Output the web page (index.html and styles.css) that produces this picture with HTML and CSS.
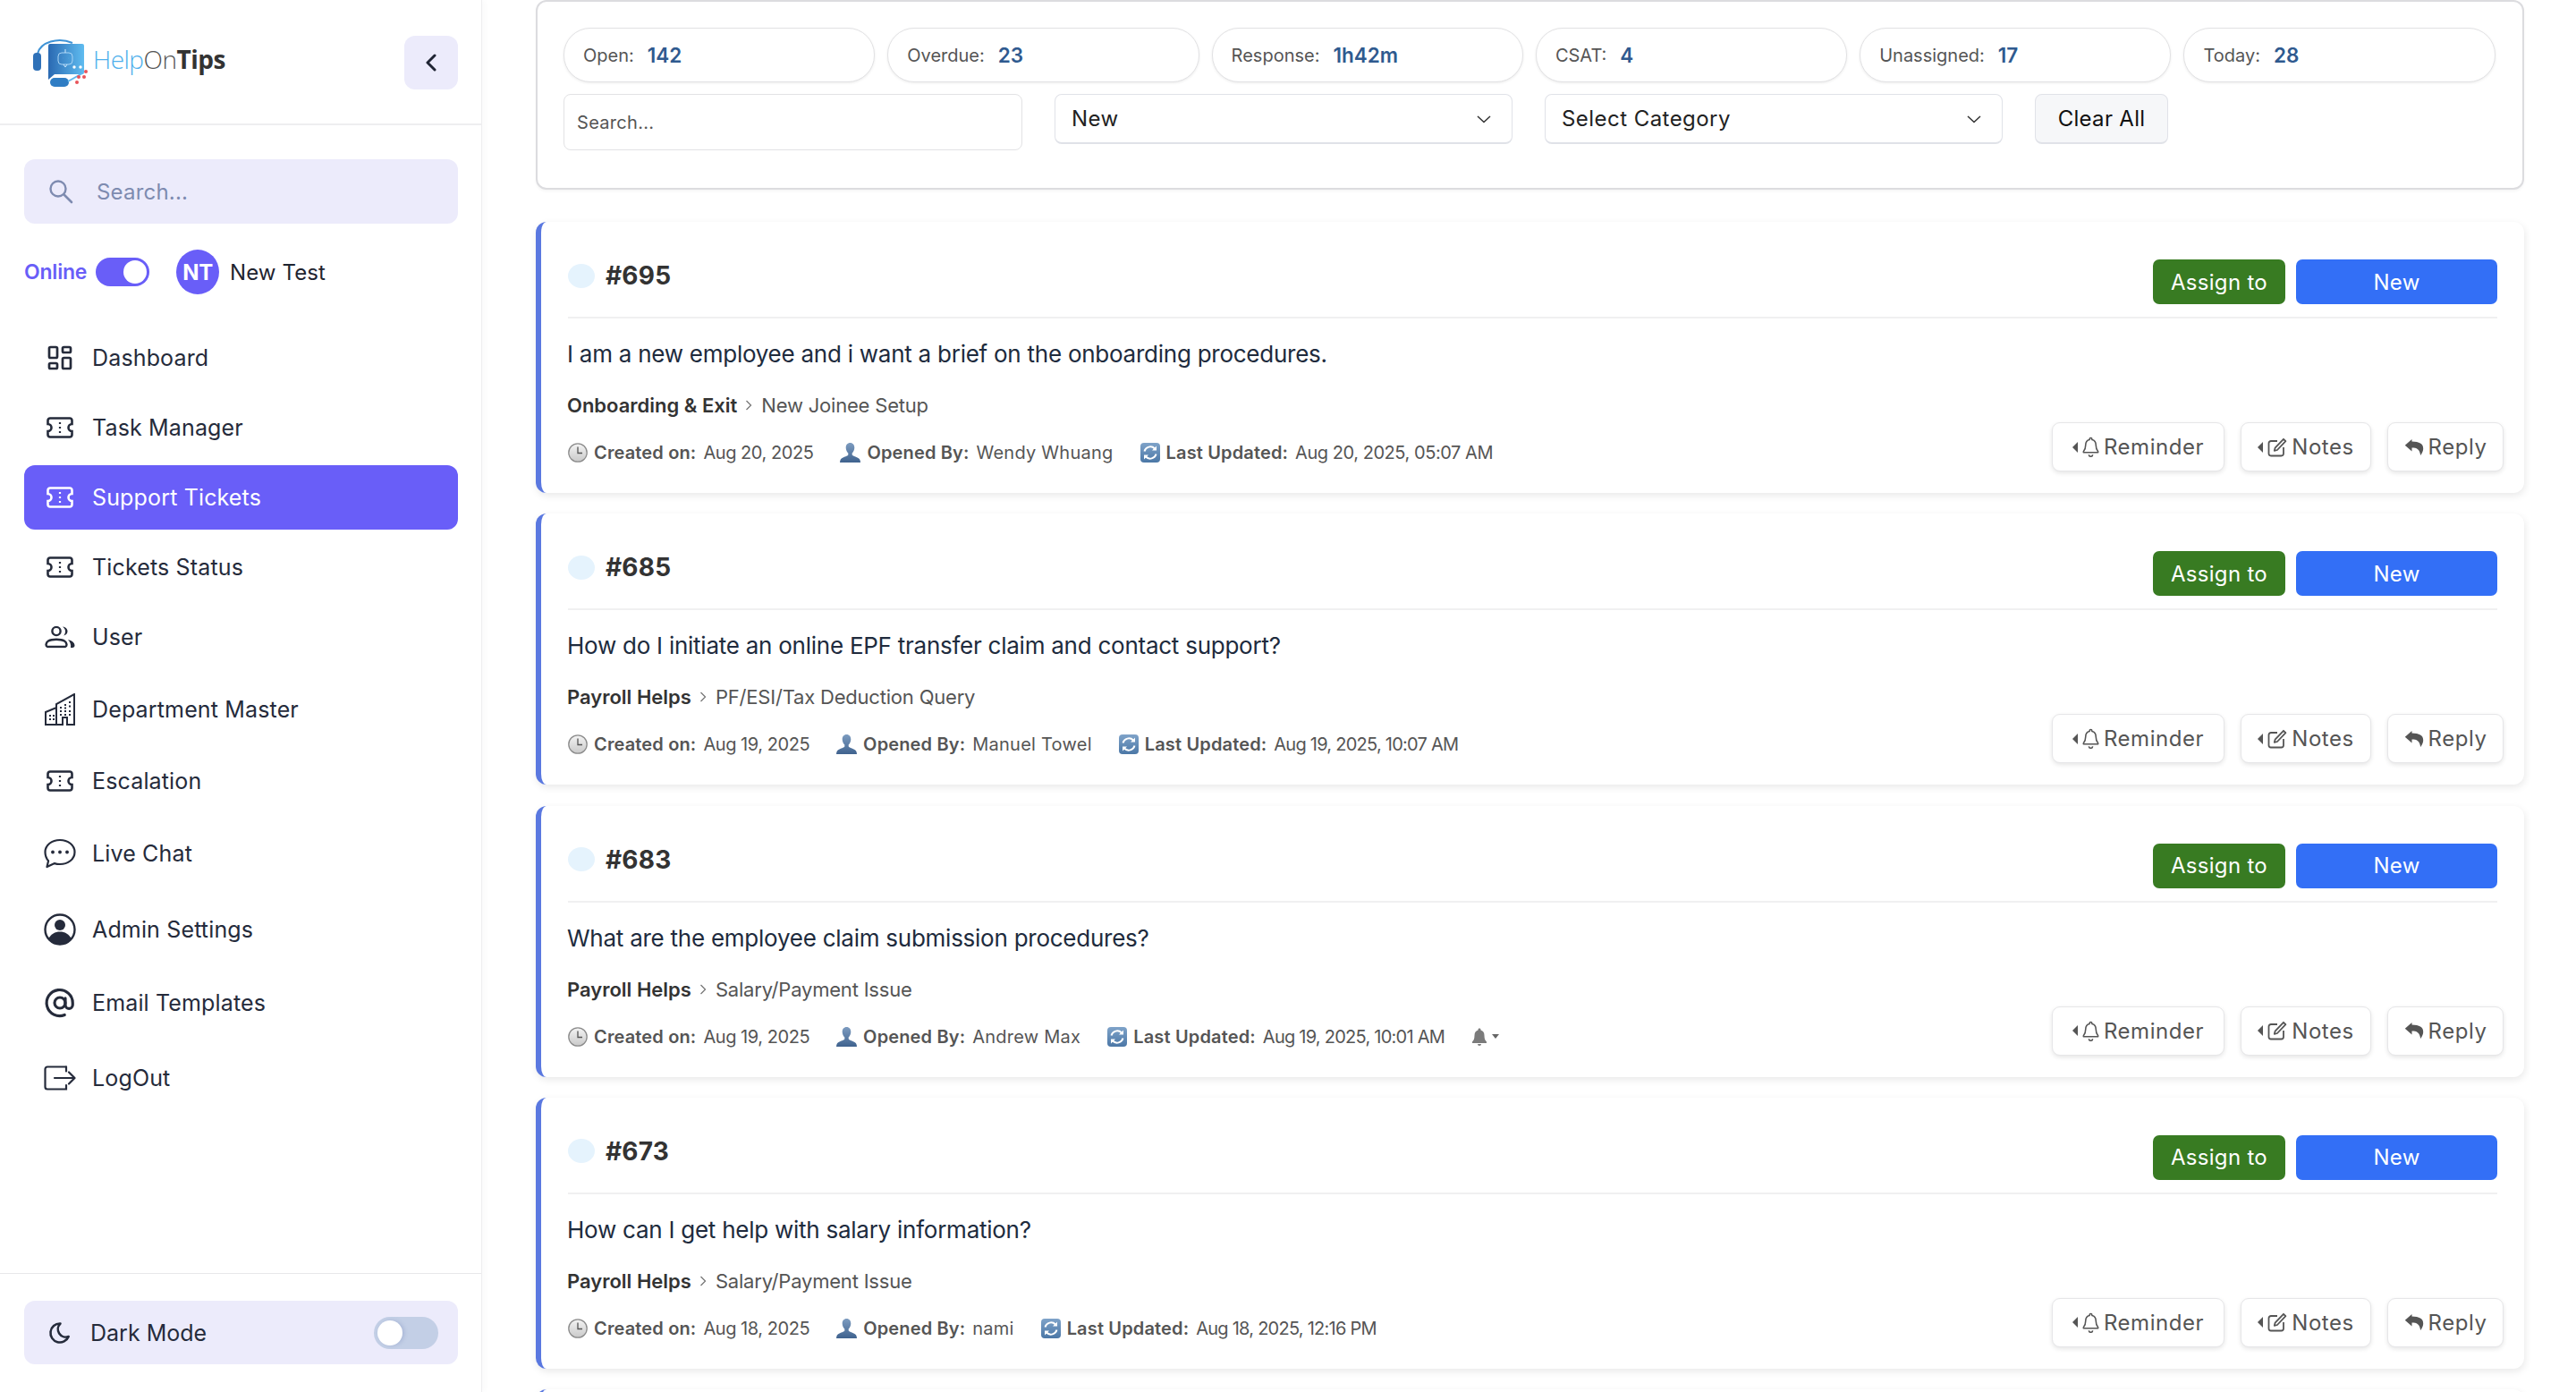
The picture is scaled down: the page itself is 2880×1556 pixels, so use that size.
FILE: index.html
```html
<!DOCTYPE html>
<html lang="en">
<head>
<meta charset="utf-8">
<title>HelpOnTips - Support Tickets</title>
<link rel="stylesheet" href="styles.css">
</head>
<body>
<svg class="defs" width="0" height="0" aria-hidden="true">
  <defs>
    <linearGradient id="g-logo" x1="0" y1="0" x2="1" y2="0"><stop offset="0" stop-color="#2a69b2"/><stop offset="1" stop-color="#5fbcf0"/></linearGradient>
    <linearGradient id="g-clock" x1="0" y1="0" x2="0" y2="1"><stop offset="0" stop-color="#f4f4f4"/><stop offset="1" stop-color="#c9c9c9"/></linearGradient>
    <linearGradient id="g-person" x1="0" y1="0" x2="0" y2="1"><stop offset="0" stop-color="#7d9cc0"/><stop offset="1" stop-color="#3f628e"/></linearGradient>
    <linearGradient id="g-sync" x1="0" y1="0" x2="0" y2="1"><stop offset="0" stop-color="#7fa3c9"/><stop offset="1" stop-color="#4b77a6"/></linearGradient>
    <symbol id="i-ticket" viewBox="0 0 30 24"><path d="M4 1.500h22a2.500 2.500 0 0 1 2.500 2.500v4a4 4 0 0 0 0 8v4a2.500 2.500 0 0 1-2.500 2.500H4A2.500 2.500 0 0 1 1.500 20v-4a4 4 0 0 0 0-8V4A2.500 2.500 0 0 1 4 1.500z" fill="none" stroke="currentColor" stroke-width="2.600"/><path d="M15 6v2M15 11v2M15 16v2" stroke="currentColor" stroke-width="2.200" fill="none"/></symbol>
    <symbol id="i-clock" viewBox="0 0 22 22"><circle cx="11" cy="11" r="10.200" fill="url(#g-clock)" stroke="#8b8b8b" stroke-width="1.300"/><path d="M11 4.500V11.500H16" stroke="#555" stroke-width="1.300" fill="none"/></symbol>
    <symbol id="i-person" viewBox="0 0 23 22"><path d="M11.500 0c3 0 4.800 2.400 4.800 5.400 0 2.600-1.300 4.800-2.600 6v1.800c0 1.200 3 2 5.800 3.200 2 .9 3.500 2.200 3.500 5.600H0c0-3.400 1.500-4.700 3.500-5.600 2.800-1.200 5.800-2 5.800-3.200v-1.800C8 10.200 6.700 8 6.700 5.400 6.700 2.400 8.500 0 11.500 0z" fill="url(#g-person)"/></symbol>
    <symbol id="i-sync" viewBox="0 0 22 22"><rect width="22" height="22" rx="4" fill="url(#g-sync)"/><path d="M4.500 9.500A6.800 6.800 0 0 1 16 6.500" stroke="#fff" stroke-width="2" fill="none"/><path d="M18 3.500v5h-5z" fill="#fff"/><path d="M17.500 12.500A6.800 6.800 0 0 1 6 15.500" stroke="#fff" stroke-width="2" fill="none"/><path d="M4 18.500v-5h5z" fill="#fff"/></symbol>
    <symbol id="i-bell" viewBox="0 0 18 22"><path d="M9 1.500c.8 0 1.300.5 1.300 1.300v.6c2.900.6 4.200 3 4.200 5.800 0 3.800 1 5.400 2.300 6.800v1H1.200v-1c1.300-1.400 2.300-3 2.300-6.800 0-2.800 1.300-5.200 4.200-5.800v-.6C7.700 2 8.200 1.500 9 1.500z" fill="none" stroke="currentColor" stroke-width="1.500" stroke-linejoin="round"/><path d="M7 19.300a2 2 0 0 0 4 0" fill="none" stroke="currentColor" stroke-width="1.500"/></symbol>
    <symbol id="i-edit" viewBox="0 0 22 22"><path d="M11 4H4a2.500 2.500 0 0 0-2.500 2.500V18A2.500 2.500 0 0 0 4 20.500h11.500A2.500 2.500 0 0 0 18 18v-7" fill="none" stroke="currentColor" stroke-width="1.800"/><path d="M18 1.800l2.400 2.400L11 14l-3.200.8.800-3.200z" fill="none" stroke="currentColor" stroke-width="1.800" stroke-linejoin="round"/></symbol>
    <symbol id="i-reply" viewBox="0 0 22 20"><path d="M8.500 1L.8 7.800l7.700 6.800v-4.100c5.600 0 8.700 1.600 9.700 8.500 2-3 3-5.500 3-7.600 0-5.400-4.300-7.600-12.700-7.800z" fill="currentColor"/></symbol>
  </defs>
</svg>

<div class="app">
  <aside class="sidebar">
    <header class="side-head">
      <div class="logo">
        <svg class="logo-mark" width="65" height="60" viewBox="0 0 65 60">
          <path d="M7 20C10 7 30 1 46 8" fill="none" stroke="#3f93d6" stroke-width="2"/>
          <rect x="2" y="19" width="9" height="20" rx="4" fill="#2f71b8"/>
          <path d="M21 9h36a2 2 0 0 1 2 2v30a2 2 0 0 1-2 2H26l-7 6V11a2 2 0 0 1 2-2z" fill="url(#g-logo)"/>
          <rect x="30" y="19" width="16" height="13" rx="4" fill="none" stroke="#a9d4f5" stroke-width="1"/>
          <path d="M38 15v4M35 25h.1M41 25h.1M36 32l2 3 2-3" fill="none" stroke="#cfe8fb" stroke-width="1"/>
          <circle cx="48" cy="35" r="1.700" fill="#fff"/><circle cx="55" cy="35" r="1.700" fill="#fff"/>
          <rect x="21" y="47" width="21" height="10" rx="5" fill="#2f7dc4"/>
          <path d="M41 51L57 42" stroke="#5fb8ee" stroke-width="2"/>
          <circle cx="53" cy="46" r="2" fill="#e8545a"/><circle cx="61" cy="40" r="2" fill="#e8545a"/><circle cx="59" cy="46" r="2" fill="#e8545a"/><circle cx="51" cy="52" r="2" fill="#e8545a"/>
        </svg>
        <span class="logo-text"><span class="logo-help">Help</span><span class="logo-on">On</span><span class="logo-tips">Tips</span></span>
      </div>
      <button class="collapse" type="button" aria-label="Collapse">
        <svg width="14" height="20" viewBox="0 0 14 20"><path d="M11 2L3 10l8 8" fill="none" stroke="#1f2433" stroke-width="3" stroke-linecap="round" stroke-linejoin="round"/></svg>
      </button>
    </header>

    <div class="side-body">
      <label class="side-search">
        <svg width="28" height="28" viewBox="0 0 28 28"><circle cx="11" cy="11" r="8.500" fill="none" stroke="#7e8bb0" stroke-width="2.400"/><path d="M17.500 17.500L26 26" stroke="#7e8bb0" stroke-width="2.600" stroke-linecap="round"/></svg>
        <span class="side-search-text">Search...</span>
      </label>

      <div class="status">
        <span class="status-label">Online</span>
        <span class="switch switch--on"><span class="knob"></span></span>
        <span class="avatar">NT</span>
        <span class="status-name">New Test</span>
      </div>

      <nav class="nav">
        <a class="nav-item">
          <svg class="nav-ico" width="36" height="36" viewBox="0 0 24 24" fill="none" stroke="currentColor" stroke-width="1.800"><rect x="4" y="4" width="6" height="8" rx="1"/><rect x="4" y="16" width="6" height="4" rx="1"/><rect x="14" y="12" width="6" height="8" rx="1"/><rect x="14" y="4" width="6" height="4" rx="1"/></svg>
          <span>Dashboard</span>
        </a>
        <a class="nav-item"><svg class="nav-ico" width="30" height="24"><use href="#i-ticket"/></svg><span>Task Manager</span></a>
        <a class="nav-item nav-item--active"><svg class="nav-ico" width="30" height="24"><use href="#i-ticket"/></svg><span>Support Tickets</span></a>
        <a class="nav-item"><svg class="nav-ico" width="30" height="24"><use href="#i-ticket"/></svg><span>Tickets Status</span></a>
        <a class="nav-item">
          <svg class="nav-ico" width="34" height="25" viewBox="0 0 34 25"><circle cx="13" cy="6" r="4.600" fill="none" stroke="currentColor" stroke-width="2.400"/><path d="M3 23.500c-2.500-1-1.500-5 1-6.500 2-1.200 5-1.800 9-1.800s7 .6 9 1.800c2.500 1.500 3.500 5.500 1 6.500z" fill="none" stroke="currentColor" stroke-width="2.400" stroke-linejoin="round"/><path d="M20 1c4 .6 5.500 3 5.500 5.200S24 10.400 21 11c1.500-1.500 2-3 2-4.800S22 2.500 20 1zM26 15.500c4.500 1 7.500 3.500 7.500 6.500 0 1.500-1 2.500-2.500 2.500h-2c.6-3.500-.5-6.500-3-9z" fill="currentColor"/></svg>
          <span>User</span>
        </a>
        <a class="nav-item nav-item--h78">
          <svg class="nav-ico" width="34" height="36" viewBox="0 0 34 36"><path d="M1 35V21l12-5v19zM13 35V12L33 1v34H25v-8h-5v8z" fill="none" stroke="currentColor" stroke-width="2"/><path d="M17 16h2M22 13h2M27 10h2M17 20h2M22 20h2M27 20h2M17 24h2M22 24h2M27 24h2M27 14.500h2M22 16.500h2M5 25h2M9 25h2M5 29h2M9 29h2" stroke="currentColor" stroke-width="2.200" fill="none"/></svg>
          <span>Department Master</span>
        </a>
        <a class="nav-item nav-item--h70"><svg class="nav-ico" width="30" height="24"><use href="#i-ticket"/></svg><span>Escalation</span></a>
        <a class="nav-item nav-item--h80">
          <svg class="nav-ico" width="36" height="34" viewBox="0 0 36 34"><path d="M18 2c9 0 16.500 5.500 16.500 13.500S27 29 18 29c-2.200 0-4.200-.3-6-.9L3.500 32l1.600-6.700C2.900 22.800 1.500 19.400 1.500 15.500 1.500 7.500 9 2 18 2z" fill="none" stroke="currentColor" stroke-width="2.200" stroke-linejoin="round"/><circle cx="10" cy="15.500" r="1.900" fill="currentColor"/><circle cx="18" cy="15.500" r="1.900" fill="currentColor"/><circle cx="26" cy="15.500" r="1.900" fill="currentColor"/></svg>
          <span>Live Chat</span>
        </a>
        <a class="nav-item nav-item--h78">
          <svg class="nav-ico" width="36" height="36" viewBox="0 0 36 36"><circle cx="18" cy="18" r="16.500" fill="none" stroke="currentColor" stroke-width="2.400"/><circle cx="18" cy="13" r="6" fill="currentColor"/><path d="M5.500 28c2.500-5 7-7.500 12.500-7.500S28 23 30.500 28A16.500 16.500 0 0 1 18 34.500 16.500 16.500 0 0 1 5.500 28z" fill="currentColor"/></svg>
          <span>Admin Settings</span>
        </a>
        <a class="nav-item nav-item--h74">
          <svg class="nav-ico" width="36" height="36" viewBox="0 0 24 24" fill="none" stroke="currentColor" stroke-width="2.100" stroke-linecap="round"><circle cx="12" cy="12" r="4"/><path d="M16 8.500V13.500a2.500 2.500 0 0 0 5.500 0V12A9.700 9.700 0 1 0 15.500 21"/></svg>
          <span>Email Templates</span>
        </a>
        <a class="nav-item nav-item--h82">
          <svg class="nav-ico" width="36" height="28" viewBox="0 0 36 28"><path d="M25 1.500H4A2.500 2.500 0 0 0 1.500 4v20A2.500 2.500 0 0 0 4 26.500h21V22" fill="none" stroke="currentColor" stroke-width="2.200" stroke-linecap="round"/><path d="M25 1.500v5M12 14h22M28 7.500l6.500 6.500-6.500 6.500" fill="none" stroke="currentColor" stroke-width="2.200" stroke-linecap="round" stroke-linejoin="round"/></svg>
          <span>LogOut</span>
        </a>
      </nav>
    </div>

    <footer class="side-foot">
      <div class="dark-box">
        <svg width="28" height="28" viewBox="0 0 24 24"><path d="M12 3c.1 0 .3 0 .4 0a7.500 7.500 0 0 0 7.900 12.400A9 9 0 1 1 12 3z" fill="none" stroke="#252b3b" stroke-width="2.200" stroke-linejoin="round"/></svg>
        <span class="dark-label">Dark Mode</span>
        <span class="switch switch--off"><span class="knob"></span></span>
      </div>
    </footer>
  </aside>

  <main class="main">
    <section class="filters">
      <div class="pills">
        <div class="pill"><span class="pill-label">Open:</span><span class="pill-value">142</span></div>
        <div class="pill"><span class="pill-label">Overdue:</span><span class="pill-value">23</span></div>
        <div class="pill"><span class="pill-label">Response:</span><span class="pill-value">1h42m</span></div>
        <div class="pill"><span class="pill-label">CSAT:</span><span class="pill-value">4</span></div>
        <div class="pill"><span class="pill-label">Unassigned:</span><span class="pill-value">17</span></div>
        <div class="pill"><span class="pill-label">Today:</span><span class="pill-value">28</span></div>
      </div>
      <div class="filter-row">
        <input class="filter-search" type="text" placeholder="Search...">
        <div class="select"><span>New</span><svg width="18" height="10" viewBox="0 0 18 10"><path d="M2 2l7 6.500L16 2" fill="none" stroke="#333" stroke-width="1.500"/></svg></div>
        <div class="select"><span>Select Category</span><svg width="18" height="10" viewBox="0 0 18 10"><path d="M2 2l7 6.500L16 2" fill="none" stroke="#333" stroke-width="1.500"/></svg></div>
        <button class="clear" type="button">Clear All</button>
      </div>
    </section>

    <section class="tickets">
      <article class="ticket">
        <div class="ticket-head">
          <div class="ticket-id"><span class="dot"></span><span>#695</span></div>
          <div class="ticket-btns"><button class="btn-assign" type="button">Assign to</button><button class="btn-status" type="button">New</button></div>
        </div>
        <p class="ticket-q">I am a new employee and i want a brief on the onboarding procedures.</p>
        <p class="ticket-cat"><b>Onboarding &amp; Exit</b><svg width="9" height="14" viewBox="0 0 9 14"><path d="M1.500 2l5 5-5 5" fill="none" stroke="#777" stroke-width="1.300"/></svg><span>New Joinee Setup</span></p>
        <div class="ticket-foot">
          <div class="meta">
            <span class="meta-item"><svg width="22" height="22"><use href="#i-clock"/></svg><b>Created on:</b><span class="date">Aug 20, 2025</span></span>
            <span class="meta-item"><svg width="23" height="22"><use href="#i-person"/></svg><b>Opened By:</b><span class="name">Wendy Whuang</span></span>
            <span class="meta-item"><svg width="22" height="22"><use href="#i-sync"/></svg><b>Last Updated:</b><span class="date">Aug 20, 2025, 05:07 AM</span></span>
          </div>
          <div class="actions">
            <button class="act act--reminder" type="button"><i class="caret"></i><svg width="19" height="23"><use href="#i-bell"/></svg>Reminder</button>
            <button class="act act--notes" type="button"><i class="caret"></i><svg width="22" height="22"><use href="#i-edit"/></svg>Notes</button>
            <button class="act act--reply" type="button"><svg width="22" height="20"><use href="#i-reply"/></svg>Reply</button>
          </div>
        </div>
      </article>

      <article class="ticket">
        <div class="ticket-head">
          <div class="ticket-id"><span class="dot"></span><span>#685</span></div>
          <div class="ticket-btns"><button class="btn-assign" type="button">Assign to</button><button class="btn-status" type="button">New</button></div>
        </div>
        <p class="ticket-q">How do I initiate an online EPF transfer claim and contact support?</p>
        <p class="ticket-cat"><b>Payroll Helps</b><svg width="9" height="14" viewBox="0 0 9 14"><path d="M1.500 2l5 5-5 5" fill="none" stroke="#777" stroke-width="1.300"/></svg><span>PF/ESI/Tax Deduction Query</span></p>
        <div class="ticket-foot">
          <div class="meta">
            <span class="meta-item"><svg width="22" height="22"><use href="#i-clock"/></svg><b>Created on:</b><span class="date">Aug 19, 2025</span></span>
            <span class="meta-item"><svg width="23" height="22"><use href="#i-person"/></svg><b>Opened By:</b><span class="name">Manuel Towel</span></span>
            <span class="meta-item"><svg width="22" height="22"><use href="#i-sync"/></svg><b>Last Updated:</b><span class="date date--tight">Aug 19, 2025, 10:07 AM</span></span>
          </div>
          <div class="actions">
            <button class="act act--reminder" type="button"><i class="caret"></i><svg width="19" height="23"><use href="#i-bell"/></svg>Reminder</button>
            <button class="act act--notes" type="button"><i class="caret"></i><svg width="22" height="22"><use href="#i-edit"/></svg>Notes</button>
            <button class="act act--reply" type="button"><svg width="22" height="20"><use href="#i-reply"/></svg>Reply</button>
          </div>
        </div>
      </article>

      <article class="ticket">
        <div class="ticket-head">
          <div class="ticket-id"><span class="dot"></span><span>#683</span></div>
          <div class="ticket-btns"><button class="btn-assign" type="button">Assign to</button><button class="btn-status" type="button">New</button></div>
        </div>
        <p class="ticket-q">What are the employee claim submission procedures?</p>
        <p class="ticket-cat"><b>Payroll Helps</b><svg width="9" height="14" viewBox="0 0 9 14"><path d="M1.500 2l5 5-5 5" fill="none" stroke="#777" stroke-width="1.300"/></svg><span>Salary/Payment Issue</span></p>
        <div class="ticket-foot">
          <div class="meta">
            <span class="meta-item"><svg width="22" height="22"><use href="#i-clock"/></svg><b>Created on:</b><span class="date">Aug 19, 2025</span></span>
            <span class="meta-item"><svg width="23" height="22"><use href="#i-person"/></svg><b>Opened By:</b><span class="name">Andrew Max</span></span>
            <span class="meta-item"><svg width="22" height="22"><use href="#i-sync"/></svg><b>Last Updated:</b><span class="date date--tight">Aug 19, 2025, 10:01 AM</span></span>
            <span class="meta-bell"><svg width="18" height="20" viewBox="0 0 18 20"><path d="M9 .5c1 0 1.500.7 1.500 1.500v.5c3 .8 4 3.200 4 6 0 4 1 5.500 2.500 7v1.500H1V15.500c1.500-1.500 2.500-3 2.500-7 0-2.800 1-5.200 4-6V2C7.500 1.200 8 .5 9 .5zM7 18h4a2 2 0 0 1-4 0z" fill="#7b7b7b"/></svg><i class="caret-down"></i></span>
          </div>
          <div class="actions">
            <button class="act act--reminder" type="button"><i class="caret"></i><svg width="19" height="23"><use href="#i-bell"/></svg>Reminder</button>
            <button class="act act--notes" type="button"><i class="caret"></i><svg width="22" height="22"><use href="#i-edit"/></svg>Notes</button>
            <button class="act act--reply" type="button"><svg width="22" height="20"><use href="#i-reply"/></svg>Reply</button>
          </div>
        </div>
      </article>

      <article class="ticket">
        <div class="ticket-head">
          <div class="ticket-id"><span class="dot"></span><span>#673</span></div>
          <div class="ticket-btns"><button class="btn-assign" type="button">Assign to</button><button class="btn-status" type="button">New</button></div>
        </div>
        <p class="ticket-q">How can I get help with salary information?</p>
        <p class="ticket-cat"><b>Payroll Helps</b><svg width="9" height="14" viewBox="0 0 9 14"><path d="M1.500 2l5 5-5 5" fill="none" stroke="#777" stroke-width="1.300"/></svg><span>Salary/Payment Issue</span></p>
        <div class="ticket-foot">
          <div class="meta">
            <span class="meta-item"><svg width="22" height="22"><use href="#i-clock"/></svg><b>Created on:</b><span class="date">Aug 18, 2025</span></span>
            <span class="meta-item"><svg width="23" height="22"><use href="#i-person"/></svg><b>Opened By:</b><span class="name">nami</span></span>
            <span class="meta-item"><svg width="22" height="22"><use href="#i-sync"/></svg><b>Last Updated:</b><span class="date date--tight">Aug 18, 2025, 12:16 PM</span></span>
          </div>
          <div class="actions">
            <button class="act act--reminder" type="button"><i class="caret"></i><svg width="19" height="23"><use href="#i-bell"/></svg>Reminder</button>
            <button class="act act--notes" type="button"><i class="caret"></i><svg width="22" height="22"><use href="#i-edit"/></svg>Notes</button>
            <button class="act act--reply" type="button"><svg width="22" height="20"><use href="#i-reply"/></svg>Reply</button>
          </div>
        </div>
      </article>

      <article class="ticket ticket--peek"></article>
    </section>
  </main>
</div>
</body>
</html>
```

FILE: styles.css
```css
* { box-sizing: border-box; }
html, body { margin: 0; height: 100%; }
body {
  font-family: Inter, "Open Sans", "Liberation Sans", sans-serif;
  color: #252b3b;
  background: #fff;
  overflow: hidden;
}
button { font-family: inherit; cursor: pointer; }
.defs { position: absolute; }

.app { display: flex; height: 100vh; overflow: hidden; }

/* Sidebar */
.sidebar {
  flex: 0 0 539px;
  display: flex;
  flex-direction: column;
  border-right: 1px solid #eeeef0;
  box-shadow: 4px 0 6px rgba(0, 0, 0, .02);
  background: #fff;
}
.side-head {
  height: 140px;
  flex: none;
  display: flex;
  align-items: flex-start;
  justify-content: space-between;
  padding: 40px 26px 0 35px;
  border-bottom: 2px solid #eeeef0;
}
.logo { display: flex; align-items: center; gap: 4px; height: 60px; }
.logo-mark { flex: none; }
.logo-text { font-family: "Open Sans", sans-serif; font-size: 28px; line-height: 1; letter-spacing: -.5px; position: relative; top: -4px; }
.logo-help { color: #4fb0ec; font-weight: 300; }
.logo-on { color: #555; font-weight: 300; }
.logo-tips { color: #333; font-weight: 700; }
.collapse {
  width: 60px; height: 60px; border: 0; border-radius: 12px; background: #ecebfb;
  display: flex; align-items: center; justify-content: center; padding: 0;
}

.side-body { flex: 1; padding: 38px 26px 0 27px; }
.side-search {
  height: 72px; border-radius: 12px; background: #ecebfb;
  display: flex; align-items: center; padding-left: 27px; gap: 26px;
}
.side-search-text { color: #7e8bb0; font-size: 24px; letter-spacing: .2px; }

.status { display: flex; align-items: center; height: 50px; margin-top: 29px; }
.status-label { color: #695ef8; font-size: 23px; font-weight: 600; width: 80px; letter-spacing: -.2px; }
.switch { display: block; position: relative; border-radius: 18px; flex: none; }
.switch--on { width: 60px; height: 32px; background: #695ef8; }
.switch--on .knob { position: absolute; right: 3px; top: 3px; width: 26px; height: 26px; border-radius: 50%; background: #fff; }
.switch--off { width: 72px; height: 36px; background: #c3cfe6; margin-left: auto; margin-right: 22px; }
.switch--off .knob { position: absolute; left: 4px; top: 4px; width: 28px; height: 28px; border-radius: 50%; background: #fff; box-shadow: 2px 0 4px rgba(90, 110, 170, .25); }
.avatar {
  width: 48px; height: 50px; border-radius: 50%; background: #695ef8; color: #fff;
  font-size: 24px; font-weight: 700; display: flex; align-items: center; justify-content: center;
  margin-left: 30px; letter-spacing: -.5px;
}
.status-name { margin-left: 12px; font-size: 24px; color: #1f2430; letter-spacing: .1px; }

.nav { margin-top: 35px; display: flex; flex-direction: column; gap: 6px; }
.nav-item {
  height: 72px; display: flex; align-items: center; border-radius: 12px; position: relative;
  padding-left: 76px; font-size: 25px; color: #252b3b; letter-spacing: .15px;
}
.nav-item--h70 { height: 70px; }
.nav-item--h74 { height: 74px; }
.nav-item--h78 { height: 78px; }
.nav-item--h80 { height: 80px; }
.nav-item--h82 { height: 82px; }
.nav-item--active { background: #695ef8; color: #fff; }
.nav-ico { position: absolute; left: 40px; top: 50%; transform: translate(-50%, -50%); }

.side-foot { flex: none; height: 133px; border-top: 1px solid #e8e8ea; padding: 30px 26px 0 27px; }
.dark-box {
  height: 71px; border-radius: 12px; background: #ecebfb; display: flex; align-items: center;
  padding-left: 26px; gap: 20px;
}
.dark-label { font-size: 25px; color: #252b3b; }

/* Main */
.main { flex: 1; min-width: 0; padding: 0 58px 0 60px; }
.filters {
  height: 212px; border: 2px solid #dcdcdf; border-radius: 12px;
  padding: 29px 28px 0 29px; box-shadow: 0 2px 3px rgba(0, 0, 0, .04);
  background: #fff;
}
.pills { display: grid; grid-template-columns: repeat(6, 348.300px); gap: 14px; }
.pill {
  height: 61px; border: 1.500px solid #e2e2e4; border-radius: 30px; display: flex; align-items: center;
  padding-left: 21px; gap: 15px; box-shadow: 0 1px 3px rgba(0, 0, 0, .08); background: #fff;
}
.pill-label { font-size: 20px; color: #555; }
.pill-value { font-size: 22.500px; font-weight: 600; color: #2f5a8f; }
.filter-row { display: flex; align-items: flex-start; margin-top: 13px; gap: 36px; }
.filter-search {
  width: 513px; height: 63px; border: 1.500px solid #e2e2e4; border-radius: 8px; padding: 0 14px;
  font: 20px Inter, sans-serif; letter-spacing: .3px; outline: 0;
}
.filter-search::placeholder { color: #555; opacity: 1; }
.select {
  width: 512px; height: 56px; border: 1.500px solid #e0e2e8; border-bottom-width: 2px; border-radius: 8px;
  display: flex; align-items: center; justify-content: space-between; padding: 0 22px 0 18px;
  font-size: 24px; color: #222; background: #fff; letter-spacing: .45px;
}
.clear {
  width: 149px; height: 56px; border: 1.500px solid #e0e2e8; border-bottom-width: 2px; border-radius: 8px;
  background: #f6f7f9; color: #111; font-size: 24px; padding: 0; letter-spacing: .3px;
}

.tickets { margin-top: 36px; display: flex; flex-direction: column; gap: 23.300px; }
.ticket {
  flex: none;
  height: 303px; background: #fff; border-left: 6px solid #5a78e0; border-radius: 12px;
  padding: 42px 30px 0 30px; box-shadow: 1px 3px 8px rgba(0, 0, 0, .09);
  display: flex; flex-direction: column;
}
.ticket--peek { padding: 0; }
.ticket-head {
  flex: none; height: 66px; display: flex; justify-content: space-between; align-items: flex-start;
  border-bottom: 2px solid #f0f0f1;
}
.ticket-id { display: flex; align-items: center; gap: 12px; font-size: 28px; font-weight: 700; color: #333; height: 34px; margin-top: 1px; letter-spacing: .2px; }
.dot { width: 30px; height: 27px; border-radius: 50%; background: #e5f3fd; }
.ticket-btns { display: flex; gap: 12px; }
.btn-assign, .btn-status {
  height: 50px; border: 0; border-radius: 7px; color: #fff; font-size: 24px; padding: 0; letter-spacing: .3px;
}
.btn-assign { width: 148px; background: #387b22; }
.btn-status { width: 225px; background: #336ff6; }
.ticket-q { margin: 24px 0 0 -1px; font-size: 26px; line-height: 32px; color: #202b3d; letter-spacing: -.25px; }
.ticket-cat { margin: 26px 0 0 -1px; display: flex; align-items: center; gap: 9px; font-size: 22px; line-height: 30px; color: #555; letter-spacing: -.2px; }
.ticket-cat b { font-weight: 600; color: #333; letter-spacing: 0; }
.ticket-foot { position: relative; flex: 1; }
.meta {
  position: absolute; left: 0; top: 25px; display: flex; align-items: center; gap: 30px;
  font-size: 20px; color: #555; line-height: 26px;
}
.meta-item { display: flex; align-items: center; gap: 7px; }
.meta-item b { font-weight: 600; margin-right: 1px; letter-spacing: .15px; }
.date { letter-spacing: -.45px; }
.date--tight { letter-spacing: -.75px; }
.name { letter-spacing: .25px; }
.meta-bell { display: flex; align-items: center; gap: 5px; }
.caret-down { width: 0; height: 0; border: 4px solid transparent; border-top: 5px solid #666; border-bottom: 0; }
.actions { position: absolute; right: -7px; top: 4px; display: flex; gap: 18px; }
.act {
  height: 55px; border: 1.500px solid #e6e6e8; border-radius: 9px; background: #fff; color: #555;
  font-size: 24px; display: flex; align-items: center; justify-content: center; gap: 5px; padding: 0;
  box-shadow: 0 2px 5px rgba(0, 0, 0, .1); letter-spacing: .55px;
}
.act--reminder { width: 193px; }
.act--notes { width: 146px; }
.act--reply { width: 130px; }
.caret { width: 0; height: 0; border: 6px solid transparent; border-right: 6px solid #555; border-left: 0; }
```
